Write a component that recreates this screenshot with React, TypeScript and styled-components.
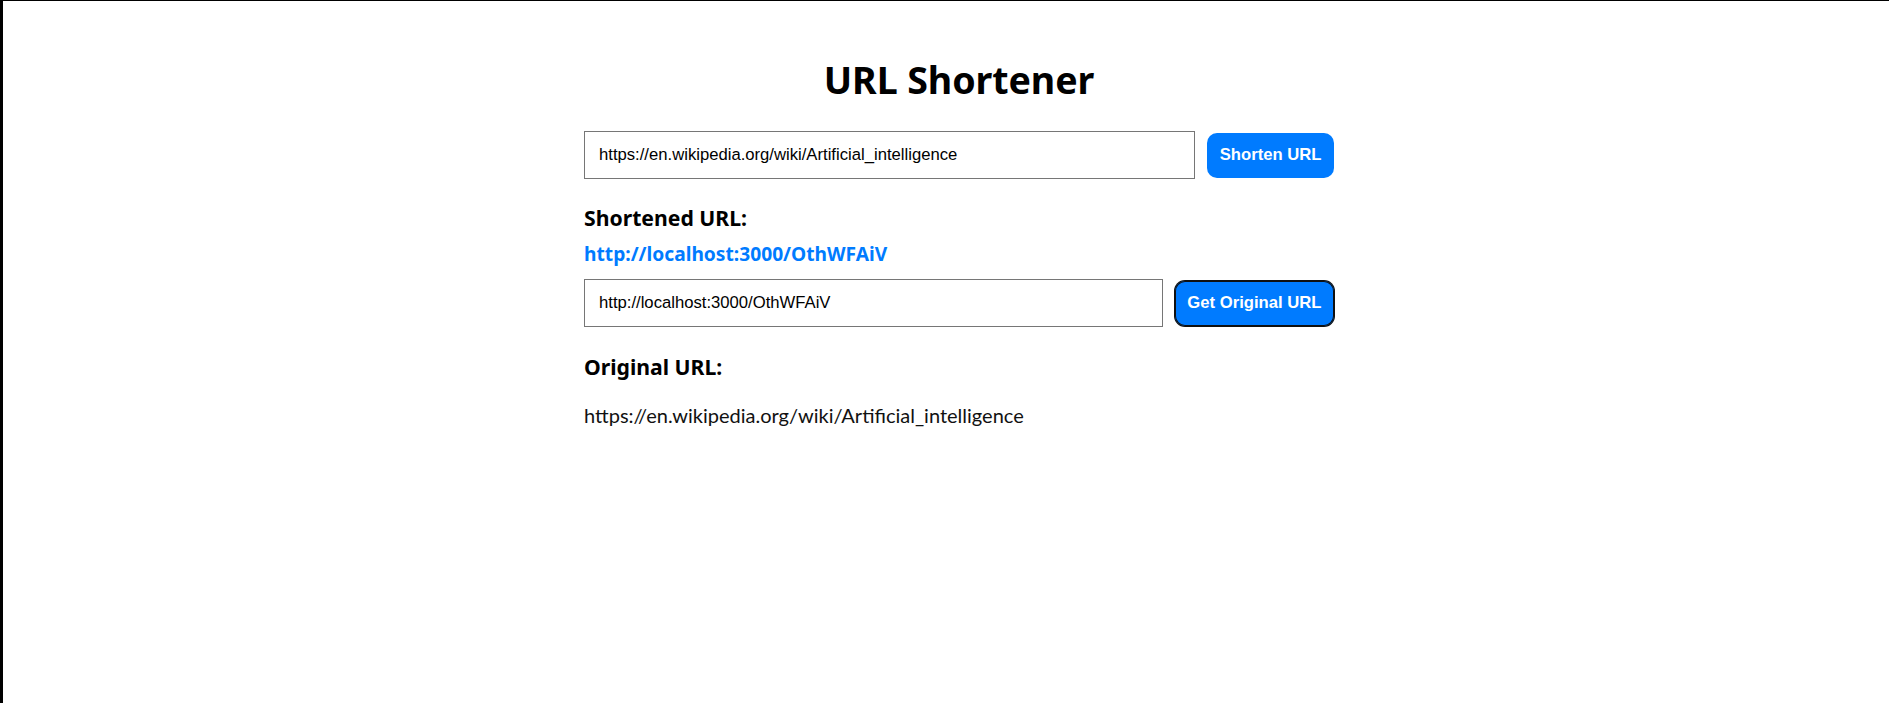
import React, { useState } from "react";
import styled, { createGlobalStyle, css } from "styled-components";

const GlobalStyle = createGlobalStyle`
  html, body {
    margin: 0;
    padding: 0;
    background: #ffffff;
  }
  body {
    font-family: Lato, "Noto Sans", sans-serif;
    color: #000;
  }
  * { box-sizing: border-box; }
`;

const Page = styled.div`
  min-height: 100vh;
  border-top: 1px solid #000;
  border-left: 3px solid #000;
  padding: 56px 0 0 26px;
  display: flex;
  justify-content: center;
  align-items: flex-start;
`;

const Container = styled.main`
  width: 750px;
  display: flex;
  flex-direction: column;
`;

const Title = styled.h1`
  margin: 0;
  text-align: center;
  font-family: "Noto Sans", sans-serif;
  font-weight: 700;
  font-size: 37.6px;
  line-height: 46px;
  letter-spacing: -0.1px;
`;

const FormRow = styled.form<{ $top: number }>`
  margin: ${(p) => p.$top}px 0 0;
  display: flex;
  align-items: center;
  gap: 12px;
  height: 48px;
`;

const UrlInput = styled.input`
  flex: 1;
  min-width: 0;
  height: 48px;
  margin: 0;
  padding: 0 14px;
  border: 1px solid #767676;
  border-radius: 0;
  background: #fff;
  font-family: "Liberation Sans", Arial, sans-serif;
  font-size: 16.67px;
  color: #000;
  outline: none;
`;

const ActionButton = styled.button<{ $focused?: boolean }>`
  flex: none;
  height: 45px;
  margin: 0;
  padding: 0 12.5px;
  border: none;
  border-radius: 10px;
  background: #007bff;
  color: #fff;
  font-family: "Liberation Sans", Arial, sans-serif;
  font-weight: 700;
  font-size: 16.67px;
  cursor: pointer;
  ${(p) =>
    p.$focused &&
    css`
      box-shadow: 0 0 0 1px #101010, inset 0 0 0 1px #101010;
    `}
`;

const Label = styled.h3<{ $top: number }>`
  margin: ${(p) => p.$top}px 0 0;
  font-family: "Noto Sans", sans-serif;
  font-weight: 700;
  font-size: 21.2px;
  line-height: 28px;
`;

const ShortLink = styled.a`
  display: block;
  margin-top: 9px;
  font-family: "Noto Sans", sans-serif;
  font-weight: 700;
  font-size: 19.2px;
  line-height: 26px;
  color: #007bff;
  text-decoration: none;
`;

const ResultText = styled.p`
  margin: 22px 0 0;
  font-family: Lato, sans-serif;
  font-size: 20px;
  line-height: 24px;
  color: #111;
`;

export default function App() {
  const [longUrl, setLongUrl] = useState("https://en.wikipedia.org/wiki/Artificial_intelligence");
  const [shortInput, setShortInput] = useState("http://localhost:3000/OthWFAiV");
  const shortUrl = "http://localhost:3000/OthWFAiV";
  const originalUrl = "https://en.wikipedia.org/wiki/Artificial_intelligence";

  return (
    <>
      <GlobalStyle />
      <Page>
        <Container>
          <Title>URL Shortener</Title>
          <FormRow $top={28} onSubmit={(e) => e.preventDefault()}>
            <UrlInput
              type="text"
              value={longUrl}
              onChange={(e) => setLongUrl(e.target.value)}
              placeholder="Enter a long URL"
            />
            <ActionButton type="submit">Shorten URL</ActionButton>
          </FormRow>

          <Label $top={25}>Shortened URL:</Label>
          <ShortLink href={shortUrl}>{shortUrl}</ShortLink>

          <FormRow $top={12} onSubmit={(e) => e.preventDefault()}>
            <UrlInput
              type="text"
              value={shortInput}
              onChange={(e) => setShortInput(e.target.value)}
              placeholder="Enter a short URL"
            />
            <ActionButton type="submit" $focused>
              Get Original URL
            </ActionButton>
          </FormRow>

          <Label $top={26}>Original URL:</Label>
          <ResultText>{originalUrl}</ResultText>
        </Container>
      </Page>
    </>
  );
}
